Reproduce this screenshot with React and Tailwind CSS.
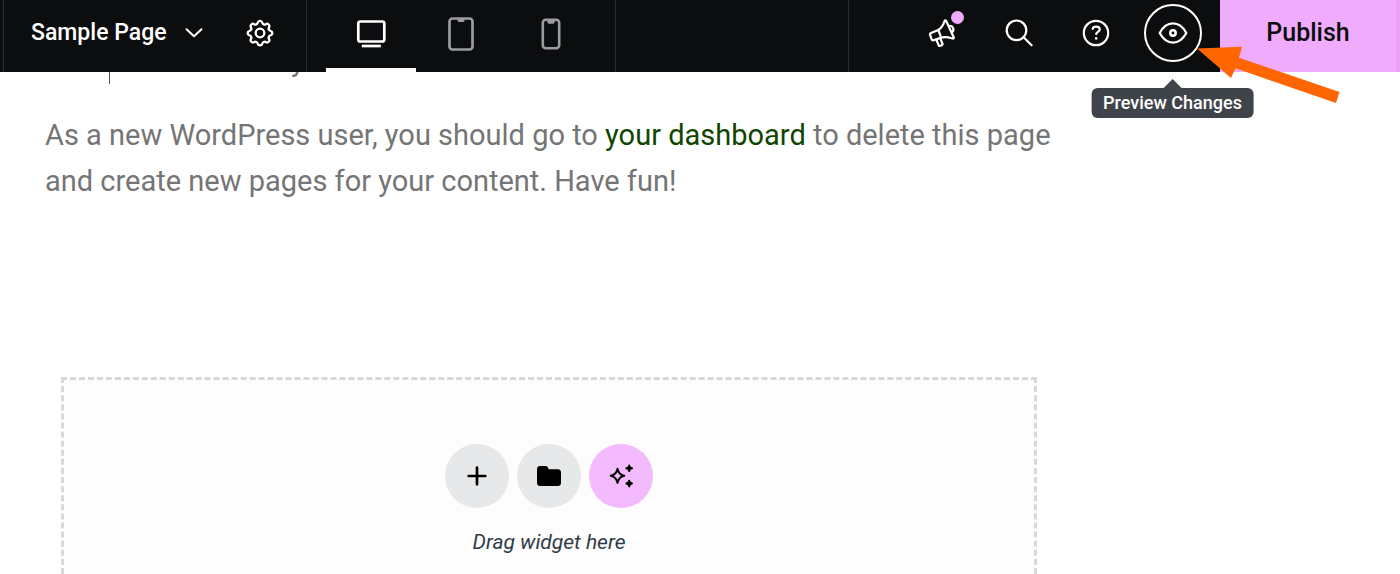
import clsx from "clsx";

function ChevronIcon() {
    return (
        <svg width="20" height="12" viewBox="0 0 20 12" fill="none" stroke="currentColor" strokeWidth="2" strokeLinecap="round" strokeLinejoin="round">
            <path d="M2.500 2.200 10 9.200l7.500-7" />
        </svg>
    );
}

function GearIcon() {
    return (
        <svg width="28" height="28" viewBox="0 0 28 28" fill="none" stroke="currentColor" strokeWidth="2.300" strokeLinejoin="round">
            <path d="M11.700 3.700c.6-2.400 4-2.400 4.600 0a2.350 2.350 0 0 0 3.500 1.500c2.100-1.300 4.500 1.100 3.200 3.200a2.350 2.350 0 0 0 1.500 3.500c2.400.6 2.400 3.900 0 4.500a2.350 2.350 0 0 0-1.500 3.500c1.300 2.100-1.100 4.500-3.200 3.200a2.350 2.350 0 0 0-3.500 1.500c-.6 2.400-4 2.400-4.600 0a2.350 2.350 0 0 0-3.500-1.500c-2.100 1.300-4.500-1.100-3.200-3.200a2.350 2.350 0 0 0-1.500-3.500c-2.400-.6-2.400-3.900 0-4.500A2.350 2.350 0 0 0 5 8.400c-1.300-2.100 1.100-4.500 3.200-3.200a2.350 2.350 0 0 0 3.500-1.500z" />
            <circle cx="14" cy="14" r="4.300" />
        </svg>
    );
}

function DesktopIcon() {
    return (
        <svg width="30" height="28" viewBox="0 0 30 28" fill="none" stroke="currentColor" strokeWidth="2.700">
            <rect x="2.300" y="1.500" width="26" height="20" rx="2" />
            <path d="M5.800 26h19" />
        </svg>
    );
}

function TabletIcon() {
    return (
        <svg width="26" height="34" viewBox="0 0 26 34" fill="none" stroke="currentColor" strokeWidth="2.700">
            <rect x="1.500" y="1.500" width="23" height="31" rx="3" />
            <path d="M9.500 2h7v1.500l-1 1.500h-5l-1-1.500z" fill="currentColor" stroke="none" />
        </svg>
    );
}

function PhoneIcon() {
    return (
        <svg width="20" height="32" viewBox="0 0 20 32" fill="none" stroke="currentColor" strokeWidth="2.600">
            <rect x="1.800" y="1.800" width="16.400" height="28.400" rx="3" />
            <path d="M6.200 2h7.600v2l-1.200 1.700H7.400L6.200 4z" fill="currentColor" stroke="none" />
        </svg>
    );
}

function MegaphoneIcon() {
    return (
        <svg width="28" height="28" viewBox="0 0 28 28" fill="none" stroke="currentColor" strokeWidth="2.200" strokeLinejoin="round" strokeLinecap="round">
            <path d="M10.300 11 3 14.100c-.8.300-1.200 1.100-.9 1.900l1.600 4.300c.3.800 1.100 1.200 1.900.9l7.600-2.600z" />
            <path d="M10.300 11c2.800-1.500 4.700-4.400 6.400-9.100.3-.8 1-.8 1.400-.1l7.600 16.400c.4.900-.2 1.500-1.100 1.300-4.300-1.200-8-1.900-11.400-.9" />
            <path d="M21 7.200c3.800-1.200 6.100 4 2.800 6.200" />
            <path d="m8.300 20.500 2.400 5.700c.3.700 1 .9 1.700.6l1.400-.6c.7-.3.900-1 .6-1.700l-2.300-5.600" />
        </svg>
    );
}

function SearchIcon() {
    return (
        <svg width="28" height="28" viewBox="0 0 28 28" fill="none" stroke="currentColor" strokeWidth="2.200" strokeLinecap="round">
            <circle cx="11.500" cy="11.300" r="9.800" />
            <path d="m18.600 18.300 8 7.900" />
        </svg>
    );
}

function HelpIcon() {
    return (
        <svg width="28" height="28" viewBox="0 0 28 28" fill="none" stroke="currentColor" strokeWidth="2.200" strokeLinecap="round" strokeLinejoin="round">
            <circle cx="14" cy="14" r="12.200" />
            <path d="M10.700 9.800c.5-2.700 6.500-3.200 7.100.3.400 2.800-3.600 2.600-3.600 5" />
            <path d="M14.200 19.300v.1" strokeWidth="2.500" />
        </svg>
    );
}

function EyeIcon() {
    return (
        <svg width="30" height="22" viewBox="0 0 30 22" fill="none" stroke="currentColor" strokeWidth="2.200" strokeLinejoin="round">
            <path d="M1.700 11C8.500-1.800 21.500-1.800 28.300 11 21.500 23.800 8.500 23.800 1.700 11z" />
            <circle cx="15" cy="11" r="2.700" strokeWidth="2.500" />
        </svg>
    );
}

function PlusIcon() {
    return (
        <svg width="20" height="20" viewBox="0 0 20 20" fill="none" stroke="currentColor" strokeWidth="2.700" strokeLinecap="round">
            <path d="M10 1.700v16.600M1.700 10h16.600" />
        </svg>
    );
}

function FolderIcon() {
    return (
        <svg width="24" height="22" viewBox="0 0 24 22" fill="currentColor">
            <path d="M3 1h5.500c1 0 2 .7 2.500 1.600L11.700 4.200H21c1.700 0 3 1.300 3 3V18c0 1.700-1.300 3-3 3H3c-1.700 0-3-1.300-3-3V4c0-1.700 1.300-3 3-3z" />
        </svg>
    );
}

function SparklesIcon() {
    return (
        <svg width="24" height="24" viewBox="0 0 24 24" fill="none" stroke="currentColor" strokeLinejoin="round">
            <path d="M8.500 4.700c.8 4.200 2.600 6.200 6.800 7.100-4.200.9-6 2.900-6.800 7.100-.8-4.200-2.600-6.200-6.800-7.100 4.200-.9 6-2.900 6.800-7.100z" strokeWidth="2" />
            <path d="M20.200 1.500c.2 1.800 1 2.600 2.800 2.800-1.800.2-2.600 1-2.800 2.800-.2-1.800-1-2.600-2.800-2.800 1.800-.2 2.600-1 2.800-2.800zM20.200 16.700c.2 1.800 1 2.600 2.800 2.800-1.800.2-2.600 1-2.800 2.800-.2-1.800-1-2.600-2.800-2.800 1.800-.2 2.600-1 2.800-2.800z" fill="currentColor" strokeWidth="2" />
        </svg>
    );
}

const devices = [
    { label: "Desktop", icon: DesktopIcon, active: true },
    { label: "Tablet", icon: TabletIcon },
    { label: "Mobile", icon: PhoneIcon },
];

const addButtons = [
    { label: "Add new container", icon: PlusIcon, color: "bg-[#e6e8ea]" },
    { label: "Add template", icon: FolderIcon, color: "bg-[#e6e8ea]" },
    { label: "Build with AI", icon: SparklesIcon, color: "bg-[#f3bafd]" },
];

function TopBar() {
    return (
        <header className="relative z-10 flex h-[72px] shrink-0 bg-[#0c0d0e] pl-[3px] text-white">
            {/* Document name and settings */}
            <div className="flex items-center border-l border-[#2b2c2e] pr-8 pb-1.5 pl-[27px]">
                <button type="button" className="flex items-center gap-[17px] text-[23px] font-medium">
                    Sample Page
                    <ChevronIcon />
                </button>
                <button type="button" aria-label="Page settings" className="ml-[42px]">
                    <GearIcon />
                </button>
            </div>

            {/* Device switcher */}
            <div className="flex border-x border-[#2b2c2e] px-[19px]">
                {devices.map(({ label, icon: Icon, active }) => (
                    <button
                        key={label}
                        type="button"
                        aria-label={label}
                        className={clsx(
                            "flex w-[90px] items-center justify-center border-b-4",
                            active ? "border-white text-white" : "border-transparent text-[#9b9c9e]"
                        )}
                    >
                        <Icon />
                    </button>
                ))}
            </div>

            <div className="flex-1" />

            {/* Tools */}
            <div className="flex items-center border-l border-[#2b2c2e] pr-[9px] pb-1.5 pl-[54px]">
                <button type="button" aria-label="What's new" className="flex w-[77px] justify-center">
                    <span className="relative">
                        <MegaphoneIcon />
                        <span className="absolute -top-2 -right-2 size-[13px] rounded-full bg-[#f0abfc]" />
                    </span>
                </button>
                <button type="button" aria-label="Finder" className="flex w-[77px] justify-center">
                    <SearchIcon />
                </button>
                <button type="button" aria-label="Help" className="flex w-[77px] justify-center">
                    <HelpIcon />
                </button>
                <div className="relative flex w-[77px] justify-center">
                    <button
                        type="button"
                        aria-label="Preview"
                        aria-describedby="preview-tip"
                        className="flex size-[58px] items-center justify-center rounded-full border-2 border-white"
                    >
                        <EyeIcon />
                    </button>
                    <div id="preview-tip" role="tooltip" className="absolute top-full left-1/2 mt-[17px] flex -translate-x-1/2 flex-col items-center">
                        <svg width="18" height="9" viewBox="0 0 18 9" fill="#3f444b">
                            <path d="M0 9 9 0l9 9z" />
                        </svg>
                        <span className="rounded-md bg-[#3f444b] px-3 text-lg leading-[30px] font-medium whitespace-nowrap">
                            Preview Changes
                        </span>
                    </div>
                    <svg className="absolute top-[42px] left-[62px]" width="144" height="60" viewBox="0 0 144 60" fill="#ff6600">
                        <path d="M1 2.500 46 .7 43 11.700l100.500 34.300-3.500 11L39.500 22.300 35 32z" />
                    </svg>
                </div>
            </div>

            <button
                type="button"
                className="w-[180px] border-r-4 border-[#eba2f5] bg-[#f0abfc] pb-1.5 text-[25px] font-medium text-[#0c0d0e]"
            >
                Publish
            </button>
        </header>
    );
}

export default function App() {
    return (
        <div className="flex h-screen flex-col overflow-hidden bg-white font-[Roboto,sans-serif]">
            <TopBar />
            <main className="flex min-h-0 flex-1 flex-col">
                <div className="px-[45px] text-[29px] leading-[46px] text-[#757575]">
                    {/* End of the quote, scrolled under the bar */}
                    <blockquote className="-mt-[34px] ml-16 border-l border-[#555] pl-[50px]">
                        community.
                    </blockquote>
                    <p className="mt-7 max-w-[1010px]">
                        As a new WordPress user, you should go to{" "}
                        <a href="#dashboard" className="text-[#104500]">your dashboard</a>{" "}
                        <span>to delete this page</span>{" "}
                        <span>and create new pages for your content. Have fun!</span>
                    </p>
                </div>

                <section className="mt-[173px] mr-[363px] ml-[61px] flex flex-1 flex-col items-center border-3 border-b-0 border-dashed border-[#d5d8dc] bg-[#fdfdfd] pt-16">
                    <div className="flex gap-2">
                        {addButtons.map(({ label, icon: Icon, color }) => (
                            <button
                                key={label}
                                type="button"
                                aria-label={label}
                                className={clsx("flex size-16 items-center justify-center rounded-full text-black", color)}
                            >
                                <Icon />
                            </button>
                        ))}
                    </div>
                    <p className="mt-5 text-[21px] leading-7 text-[#303b47] italic">Drag widget here</p>
                </section>
            </main>
        </div>
    );
}
